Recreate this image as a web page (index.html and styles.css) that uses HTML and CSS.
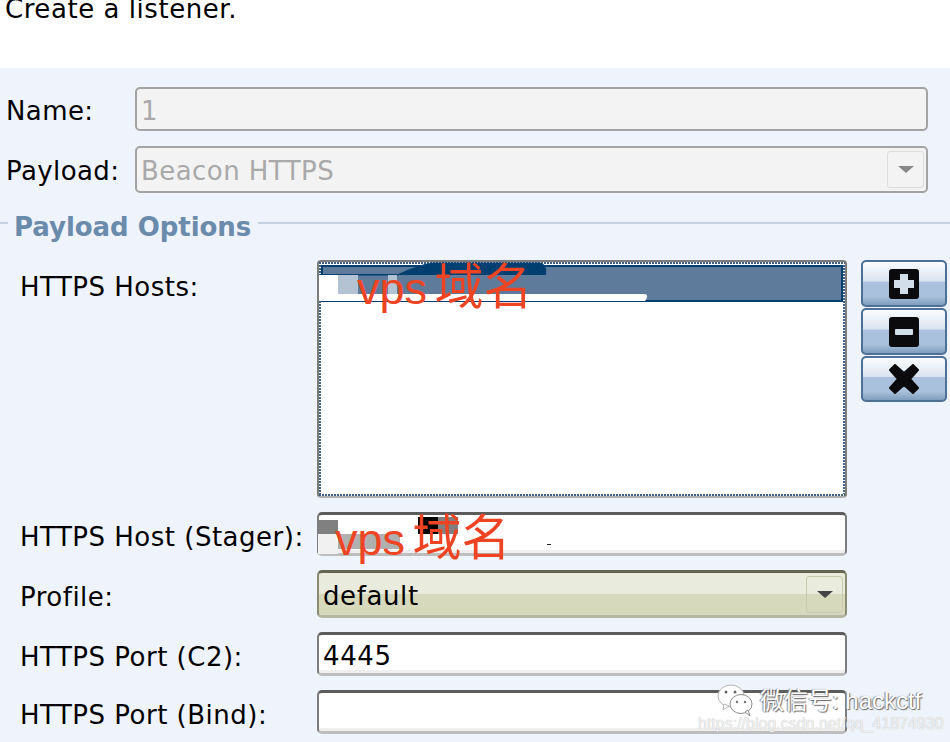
FILE: index.html
```html
<!DOCTYPE html>
<html lang="en">
<head>
    <meta charset="UTF-8">
    <title>New Listener</title>
    <link rel="stylesheet" href="styles.css">
</head>
<body>
    <div class="intro">Create a listener.</div>
    <div class="panel">
        <div class="top-row row-name">
            <div class="label">Name:</div>
            <div class="field off"><span class="value">1</span></div>
        </div>
        <div class="top-row row-payload">
            <div class="label">Payload:</div>
            <div class="field off combo">
                <span class="value">Beacon HTTPS</span>
                <span class="arrow-box"><span class="arrow"></span></span>
            </div>
        </div>
        <div class="legend">
            <span class="legend-line short"></span>
            <span class="legend-text">Payload Options</span>
            <span class="legend-line"></span>
        </div>
        <div class="options">
            <div class="label">HTTPS Hosts:</div>
            <div class="list">
                <div class="list-inner">
                    <div class="list-sel"></div>
                </div>
                <svg class="scribble" width="530" height="50" viewBox="0 0 530 50">
                    <path d="M80 14.500C95 8 105 4 116 2.500H222C228 3 230 8 229 15H80Z" fill="#003f6f"/>
                    <path d="M3 14H82V15.500H3Z" fill="#003f6f"/>
                    <path d="M2 15H21V35H2ZM2 34H327C331 34 331 37 328 41H2Z" fill="#fff"/>
                    <path d="M21 15H41V34H21ZM71 15H80V34H71Z" fill="#b4c3d3"/>
                </svg>
                <span class="red-note note-hosts">vps <span class="cjk">域名</span></span>
            </div>
            <div class="buttons">
                <div class="icon-btn">
                    <svg width="30" height="30" viewBox="0 0 30 30"><rect width="30" height="30" rx="3" fill="#0b0b0d"/><path d="M11 5h8v6h6v8h-6v6h-8v-6H5v-8h6Z" fill="#d3deeb"/></svg>
                </div>
                <div class="icon-btn">
                    <svg width="30" height="30" viewBox="0 0 30 30"><rect width="30" height="30" rx="3" fill="#0b0b0d"/><rect x="6" y="12" width="18" height="6" rx="1" fill="#d3deeb"/></svg>
                </div>
                <div class="icon-btn">
                    <svg width="30" height="30" viewBox="0 0 30 30"><path d="M6 1 15 9 24 1 29 6 21 15 29 24 24 29 15 21 6 29 1 24 9 15 1 6Z" fill="#0b0b0d" stroke="#0b0b0d" stroke-width="2" stroke-linejoin="round"/></svg>
                </div>
            </div>

            <div class="label">HTTPS Host (Stager):</div>
            <div class="field">
                <svg class="scribble" width="530" height="44" viewBox="0 0 530 44">
                    <path d="M1 8H21V22H1Z" fill="#808080"/>
                    <path d="M1 22H21V42H1Z" fill="#f1f1f1"/>
                    <path d="M21 22H83V37H21Z" fill="#b0b0b0"/>
                    <path d="M101 5H121V22H101Z" fill="#000"/>
                    <path d="M121 5H141V22H121Z" fill="#808080"/>
                    <path d="M230 32h4v1h-4Z" fill="#222"/>
                </svg>
                <span class="red-note note-stager">vps <span class="cjk">域名</span></span>
            </div>
            <div></div>

            <div class="label">Profile:</div>
            <div class="field combo picked">
                <span class="value">default</span>
                <span class="arrow-box"><span class="arrow"></span></span>
            </div>
            <div></div>

            <div class="label">HTTPS Port (C2):</div>
            <div class="field"><span class="value">4445</span></div>
            <div></div>

            <div class="label">HTTPS Port (Bind):</div>
            <div class="field"></div>
            <div></div>
        </div>
        <div class="watermark">
            <svg class="wechat" width="36" height="33" viewBox="0 0 36 33">
                <ellipse cx="14" cy="12" rx="13" ry="11" fill="#fff" stroke="#b5b5b5"/>
                <path d="M7 20 6 26 12 22Z" fill="#fff" stroke="#b5b5b5"/>
                <ellipse cx="24" cy="20" rx="11" ry="9.500" fill="#fff" stroke="#8d8d8d"/>
                <path d="M28 28 33 32 31 26Z" fill="#fff" stroke="#8d8d8d"/>
                <circle cx="9" cy="8" r="1.500" fill="#666"/>
                <circle cx="18" cy="8" r="1.500" fill="#666"/>
                <circle cx="20" cy="18" r="1.200" fill="#777"/>
                <circle cx="28" cy="18" r="1.200" fill="#777"/>
            </svg>
            <span class="wm-name">微信号: hackctf</span>
            <span class="wm-url">https://blog.csdn.net/qq_41874930</span>
        </div>
    </div>
</body>
</html>
```

FILE: styles.css
```css
html, body {
    margin: 0;
    padding: 0;
    height: 742px;
    overflow: hidden;
}
body {
    background-color: #fff;
    font-family: "DejaVu Sans", "Noto Sans", sans-serif;
    font-size: 26px;
    color: #000;
}
.intro {
    height: 68px;
    padding-left: 5px;
    line-height: 18px;
    letter-spacing: 0.55px;
    overflow: hidden;
}
.panel {
    position: relative;
    height: 674px;
    padding-top: 19px;
    box-sizing: border-box;
    background-color: #eff3fb;
    overflow: hidden;
}
.top-row {
    display: grid;
    grid-template-columns: 128px 793px;
    padding-left: 7px;
    align-items: center;
}
.top-row .label {
    margin-left: -1px;
    padding-top: 3px;
}
.row-name .field {
    height: 44px;
}
.row-payload {
    margin-top: 15px;
}
.row-payload .field {
    height: 47px;
}
.label {
    line-height: 32px;
    letter-spacing: 0.4px;
}
.legend {
    display: flex;
    align-items: center;
    height: 36px;
    margin-top: 15px;
}
.legend-line {
    flex: 1;
    height: 2px;
    margin-top: -6px;
    background-color: #c3d1e2;
}
.legend-line.short {
    flex: none;
    width: 8px;
}
.legend-text {
    padding: 2px 7px 0 6px;
    font-weight: bold;
    letter-spacing: -0.05px;
    color: #6a8bab;
}
.options {
    display: grid;
    grid-template-columns: 297px 530px 86px;
    grid-template-rows: 238px 44px 48px 44px 44px;
    row-gap: 14px;
    margin-top: 16px;
    padding-left: 20px;
    align-items: center;
}
.options .label {
    padding-top: 6px;
    letter-spacing: 0.5px;
}
.options .label:first-child {
    align-self: start;
    margin-top: 5px;
}
.options .field {
    height: 100%;
}
.options .value {
    padding-top: 4px;
    letter-spacing: 0.6px;
}
.value {
    padding-top: 4px;
}
.row-payload .value {
    padding-top: 2px;
    letter-spacing: 0.45px;
}
.field {
    position: relative;
    display: flex;
    align-items: center;
    box-sizing: border-box;
    padding-left: 4px;
    background-color: #fff;
    border: 2px solid #7c7c7c;
    border-top: 3px solid #5c5c5c;
    border-bottom: 3px solid #bdbdbd;
    border-radius: 5px;
    box-shadow: inset 0 -3px 0 #efefef;
    line-height: 1;
    letter-spacing: 0.3px;
}
.field.off {
    padding-left: 4px;
    background-color: #f3f3f3;
    border: 2px solid #a3a3a3;
    box-shadow: none;
    color: #a9a9a9;
}
.field.picked {
    background: linear-gradient(#e9ebdc 50%, #d6d9bc 50%);
    border-color: #65664f #8a8b70 #b5b7a0;
    box-shadow: none;
}
.combo {
    justify-content: space-between;
}
.arrow-box {
    display: flex;
    align-items: center;
    justify-content: center;
    width: 37px;
    height: 37px;
    box-sizing: border-box;
    margin-right: 2px;
    border: 1px solid #dcdcdc;
    border-radius: 3px;
}
.picked .arrow-box {
    border-color: #c8cab0;
}
.arrow {
    width: 0;
    height: 0;
    border-left: 8px solid transparent;
    border-right: 8px solid transparent;
    border-top: 7px solid #888;
}
.picked .arrow {
    border-top-color: #444;
}
.list {
    position: relative;
    height: 238px;
    box-sizing: border-box;
    background-color: #fff;
    border: 2px solid #7c7c7c;
    border-bottom-color: #aeaeae;
    border-radius: 4px;
}
.list-inner {
    height: 100%;
    box-sizing: border-box;
    padding: 3px 2px 2px;
    background:
        repeating-linear-gradient(90deg, #3f6187 0 2px, #fff 2px 3px) top / 100% 2px no-repeat,
        repeating-linear-gradient(90deg, #3f6187 0 2px, #fff 2px 3px) bottom / 100% 2px no-repeat,
        repeating-linear-gradient(#3f6187 0 2px, #fff 2px 3px) left / 2px 100% no-repeat,
        repeating-linear-gradient(#3f6187 0 2px, #fff 2px 3px) right / 2px 100% no-repeat;
}
.list-sel {
    height: 37px;
    box-sizing: border-box;
    background-color: #5f7b9b;
    border: 2px solid #003f6f;
}
.scribble {
    position: absolute;
    top: 0;
    left: 0;
}
.list .scribble {
    top: -2px;
    left: -2px;
}
.field .scribble {
    top: -3px;
    left: -2px;
}
.red-note {
    position: absolute;
    font-family: "Liberation Sans", "Noto Sans CJK SC", sans-serif;
    font-size: 45px;
    line-height: 50px;
    letter-spacing: 0;
    word-spacing: -5px;
    color: #ee4423;
    white-space: nowrap;
}
.cjk {
    font-size: 49px;
}
.note-hosts {
    top: 0;
    left: 38px;
}
.note-stager {
    top: -2px;
    left: 16px;
}
.buttons {
    display: flex;
    flex-direction: column;
    gap: 1px;
    align-self: start;
    margin-left: 14px;
}
.icon-btn {
    display: flex;
    align-items: center;
    justify-content: center;
    width: 86px;
    height: 47px;
    box-sizing: border-box;
    border: 2px solid #4d7095;
    border-radius: 5px;
    background: linear-gradient(#fafcfe 0%, #d9e3ef 45%, #a9c1dc 46%, #a9c1dc 80%, #7f9dbd 100%);
}
.icon-btn:last-child {
    height: 46px;
}
.watermark {
    position: absolute;
    top: 0;
    left: 0;
}
.wechat {
    position: absolute;
    top: 616px;
    left: 717px;
}
.wm-name,
.wm-url {
    position: absolute;
    font-family: "Liberation Sans", "Noto Sans CJK SC", sans-serif;
    white-space: nowrap;
}
.wm-name {
    top: 618px;
    left: 760px;
    font-size: 24px;
    line-height: 30px;
    color: #fff;
    text-shadow: 1px 1px 1px #666, -1px 0 1px #888;
}
.wm-url {
    top: 645px;
    left: 698px;
    font-size: 16px;
    line-height: 22px;
    color: rgba(255, 255, 255, 0.8);
    text-shadow: 0 0 1px #aaa;
}
```
